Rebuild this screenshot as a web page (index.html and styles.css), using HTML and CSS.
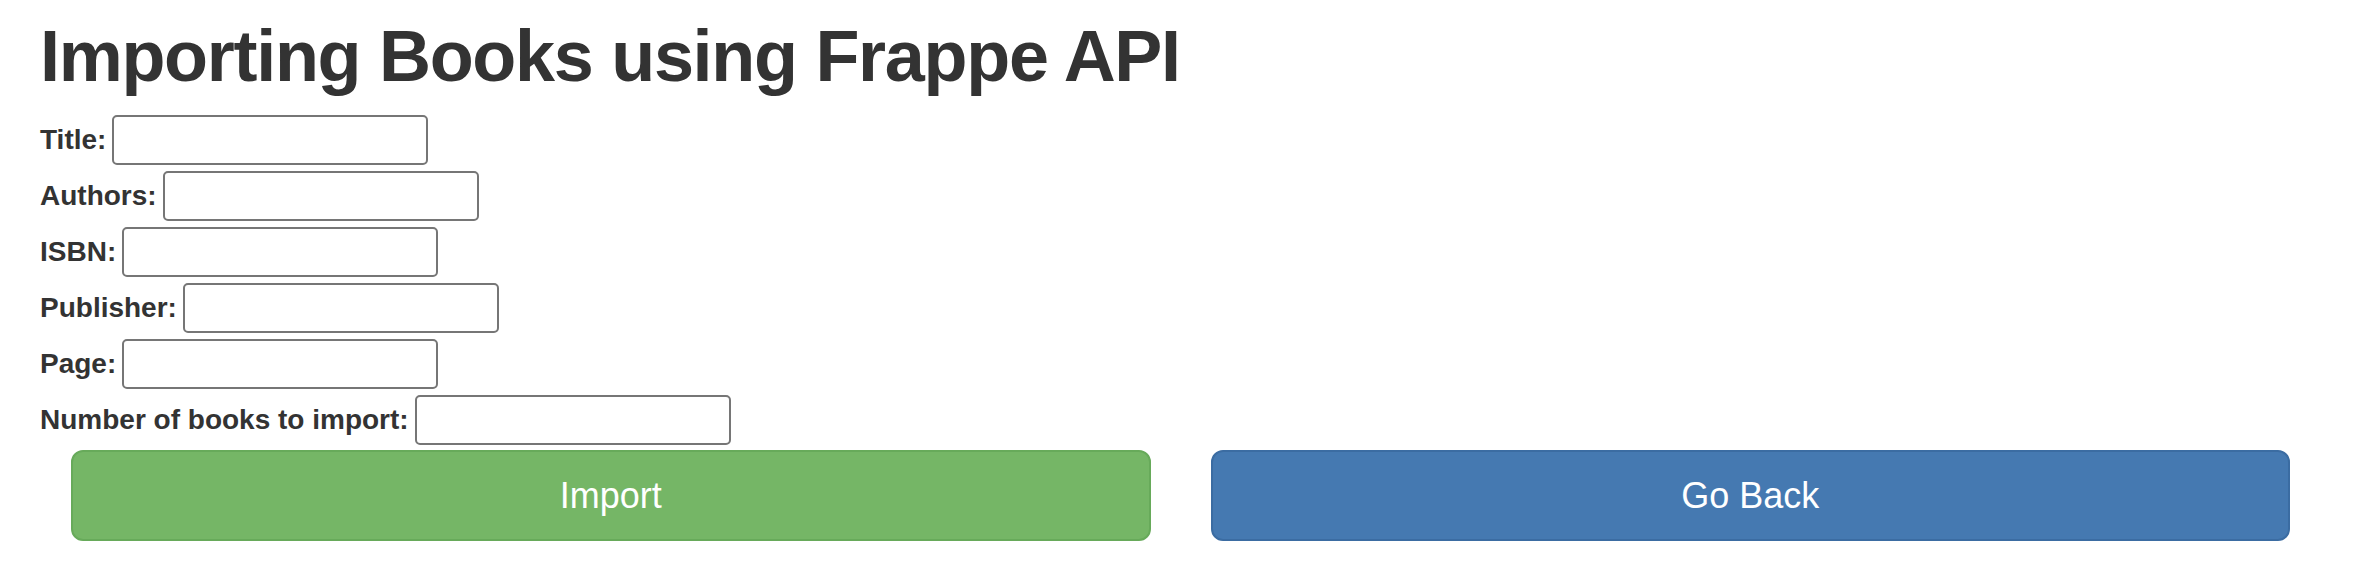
FILE: index.html
```html
<!DOCTYPE html>
<html lang="en">
<head>
  <meta charset="UTF-8">
  <meta name="viewport" content="width=device-width, initial-scale=1.0">
  <title>Importing Books</title>
  <link rel="stylesheet" href="styles.css">
</head>
<body>
  <h1>Importing Books using Frappe API</h1>

  <form class="import-form">
    <div class="field">
      <label for="title">Title:</label>
      <input type="text" id="title" name="title">
    </div>
    <div class="field">
      <label for="authors">Authors:</label>
      <input type="text" id="authors" name="authors">
    </div>
    <div class="field">
      <label for="isbn">ISBN:</label>
      <input type="text" id="isbn" name="isbn">
    </div>
    <div class="field">
      <label for="publisher">Publisher:</label>
      <input type="text" id="publisher" name="publisher">
    </div>
    <div class="field">
      <label for="page">Page:</label>
      <input type="text" id="page" name="page">
    </div>
    <div class="field">
      <label for="count">Number of books to import:</label>
      <input type="text" id="count" name="count">
    </div>

    <div class="actions">
      <button type="submit" class="btn btn-success">Import</button>
      <button type="button" class="btn btn-primary">Go Back</button>
    </div>
  </form>
</body>
</html>
```

FILE: styles.css
```css
body {
  margin: 0;
  padding: 16px 0 0 40px;
  font-family: "Liberation Sans", Arial, sans-serif;
  color: #333;
  background: #fff;
}
h1 {
  margin: 0 0 19px;
  font-size: 72px;
  line-height: 80px;
  font-weight: bold;
  letter-spacing: -1.3px;
  color: #333;
}
.field {
  display: flex;
  align-items: center;
  gap: 6px;
  margin-bottom: 6px;
}
.field label {
  font-size: 28px;
  font-weight: bold;
  line-height: normal;
}
.field input {
  box-sizing: border-box;
  width: 316px;
  height: 50px;
  margin: 0;
  border: 2px solid #767676;
  border-radius: 5px;
  background: #fff;
  font-size: 26px;
  padding: 2px 6px;
}
.actions {
  display: flex;
  gap: 60px;
  padding: 0 76px 0 31px;
  margin-top: -1px;
}
.btn {
  flex: 1;
  height: 91px;
  border-radius: 12px;
  border: 2px solid;
  font-family: "Liberation Sans", Arial, sans-serif;
  font-size: 36px;
  color: #fff;
  cursor: pointer;
}
.btn-success {
  background-color: #75b666;
  border-color: #67aa5a;
}
.btn-primary {
  background-color: #4579b1;
  border-color: #3b6ca2;
}
```
